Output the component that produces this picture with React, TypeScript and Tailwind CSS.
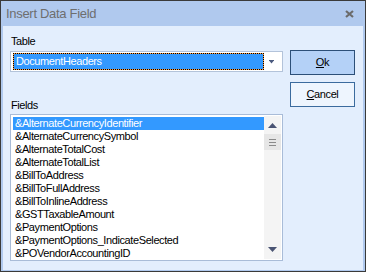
import React from "react";

const fields = [
  "&AlternateCurrencyIdentifier",
  "&AlternateCurrencySymbol",
  "&AlternateTotalCost",
  "&AlternateTotalList",
  "&BillToAddress",
  "&BillToFullAddress",
  "&BillToInlineAddress",
  "&GSTTaxableAmount",
  "&PaymentOptions",
  "&PaymentOptions_IndicateSelected",
  "&POVendorAccountingID",
];

export default function App() {
  return (
    <div
      className="w-[366px] h-[272px] border border-[#3a3a3a] bg-[#b0c9ee] flex flex-col text-[11px] tracking-[-0.4px] text-black"
      style={{ fontFamily: '"Liberation Sans", Arial, sans-serif' }}
    >
      {/* title bar */}
      <div className="h-[25px] flex items-center justify-between pl-[5px] pr-[11px] shrink-0">
        <span className="text-[13px] tracking-[-0.3px] text-[#6e6e6e] pt-[1px]">Insert Data Field</span>
        <svg width="9" height="8" viewBox="0 0 9 8" className="mt-[1px]">
          <path d="M1 1 L8 7 M8 1 L1 7" stroke="#6b6b6b" strokeWidth="2.2" />
        </svg>
      </div>

      {/* body */}
      <div className="flex-1 mx-[2px] mb-[1px] bg-[#e3eefd] flex px-[7px] pt-[8px] gap-[7px]">
        <div className="w-[273px] flex flex-col">
          <div className="h-[14px] leading-[14px] pl-[1px]">Table</div>
          <div className="mt-[3px] h-[21px] border border-[#b3c3da] bg-white flex items-center p-[1px]">
            <div className="w-[251px] h-[17px] bg-[#ff9a3c] ml-[1px]">
              <div className="h-full border border-dotted border-black bg-[#3399ff] bg-clip-padding text-white leading-[15px] pl-[2px]">
                DocumentHeaders
              </div>
            </div>
            <div className="flex-1 flex justify-center pr-[2px]">
              <svg width="5" height="4" viewBox="0 0 5 4">
                <path d="M0 0 H5 V1 H0 Z M0.5 1 H4.5 L2.5 3.5 Z" fill="#4b5a7e" />
              </svg>
            </div>
          </div>

          <div className="mt-[26px] h-[14px] leading-[14px] pl-[1px]">Fields</div>
          <div className="mt-[2px] h-[147px] border border-[#a9bcd8] bg-white flex p-px">
            <div className="flex-1 pl-[1px] pt-px">
              {fields.map((f, i) => (
                <div
                  key={f}
                  className={
                    i === 0
                      ? "h-[13px] leading-[13px] bg-[#3399ff] text-white pl-[2px]"
                      : "h-[13px] leading-[13px] pl-[2px]"
                  }
                >
                  {f}
                </div>
              ))}
            </div>
            <div className="w-[17px] bg-[#f4f4f4] flex flex-col items-center">
              <svg width="9" height="5" viewBox="0 0 9 5" className="mt-[7px]">
                <path d="M4.5 0 L9 5 H0 Z" fill="#4a5473" />
              </svg>
              <div className="mt-[6px] w-[17px] h-[16px] bg-[#e6e6e6] flex flex-col items-center justify-center gap-[2px]">
                <div className="w-[7px] h-px bg-[#8a8a8a]" />
                <div className="w-[7px] h-px bg-[#8a8a8a]" />
                <div className="w-[7px] h-px bg-[#8a8a8a]" />
              </div>
              <div className="flex-1" />
              <svg width="9" height="5" viewBox="0 0 9 5" className="mb-[7px]">
                <path d="M0 0 H9 L4.5 5 Z" fill="#4a5473" />
              </svg>
            </div>
          </div>
        </div>

        <div className="w-[65px] flex flex-col gap-[7px] pt-[16px]">
          <button className="h-[25px] border border-[#2c4f78] bg-[#b4d1f7] flex items-center justify-center">
            <span>
              <span className="underline">O</span>k
            </span>
          </button>
          <button className="h-[25px] border border-[#3b6b9e] bg-[#eef5fe] flex items-center justify-center">
            <span>
              <span className="underline">C</span>ancel
            </span>
          </button>
        </div>
      </div>
    </div>
  );
}
